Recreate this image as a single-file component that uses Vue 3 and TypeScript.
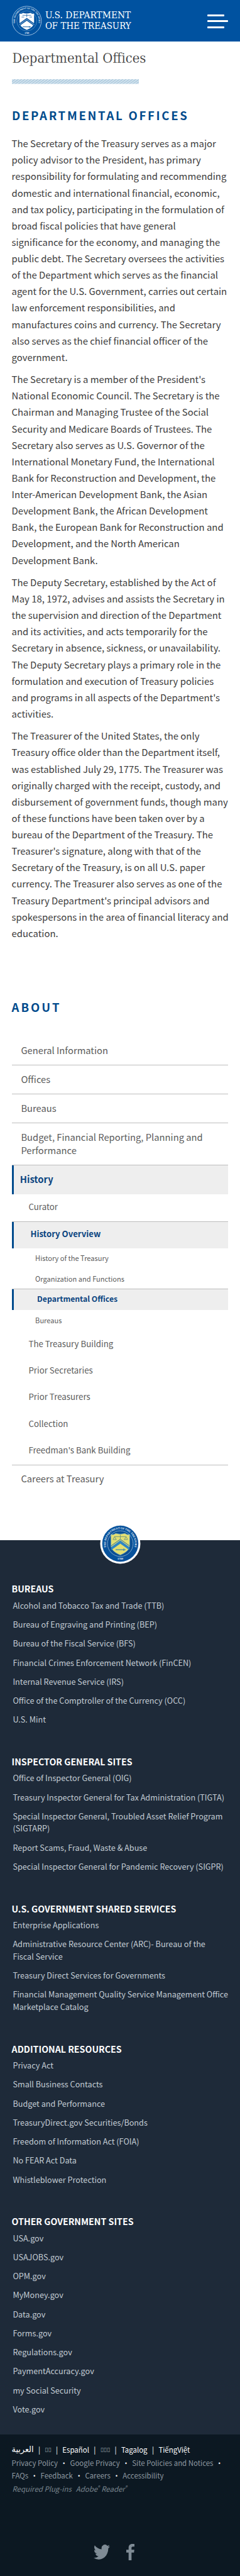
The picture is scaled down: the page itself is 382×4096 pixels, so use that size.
<script setup lang="ts">
interface NavItem {
  label: string
  level: 1 | 2 | 3
  active?: boolean
  rule?: boolean
}

interface LinkGroup {
  title: string
  links: string[]
}

const paragraphs: string[] = [
  `The Secretary of the Treasury serves as a major
policy advisor to the President, has primary
responsibility for formulating and recommending
domestic and international financial, economic,
and tax policy, participating in the formulation of
broad fiscal policies that have general
significance for the economy, and managing the
public debt. The Secretary oversees the activities
of the Department which serves as the financial
agent for the U.S. Government, carries out certain
law enforcement responsibilities, and
manufactures coins and currency. The Secretary
also serves as the chief financial officer of the
government.`,
  `The Secretary is a member of the President's
National Economic Council. The Secretary is the
Chairman and Managing Trustee of the Social
Security and Medicare Boards of Trustees. The
Secretary also serves as U.S. Governor of the
International Monetary Fund, the International
Bank for Reconstruction and Development, the
Inter-American Development Bank, the Asian
Development Bank, the African Development
Bank, the European Bank for Reconstruction and
Development, and the North American
Development Bank.`,
  `The Deputy Secretary, established by the Act of
May 18, 1972, advises and assists the Secretary in
the supervision and direction of the Department
and its activities, and acts temporarily for the
Secretary in absence, sickness, or unavailability.
The Deputy Secretary plays a primary role in the
formulation and execution of Treasury policies
and programs in all aspects of the Department's
activities.`,
  `The Treasurer of the United States, the only
Treasury office older than the Department itself,
was established July 29, 1775. The Treasurer was
originally charged with the receipt, custody, and
disbursement of government funds, though many
of these functions have been taken over by a
bureau of the Department of the Treasury. The
Treasurer's signature, along with that of the
Secretary of the Treasury, is on all U.S. paper
currency. The Treasurer also serves as one of the
Treasury Department's principal advisors and
spokespersons in the area of financial literacy and
education.`,
]

const nav: NavItem[] = [
  { label: 'General Information', level: 1, rule: true },
  { label: 'Offices', level: 1, rule: true },
  { label: 'Bureaus', level: 1, rule: true },
  { label: 'Budget, Financial Reporting, Planning and\nPerformance', level: 1, rule: true },
  { label: 'History', level: 1, active: true },
  { label: 'Curator', level: 2, rule: true },
  { label: 'History Overview', level: 2, active: true },
  { label: 'History of the Treasury', level: 3 },
  { label: 'Organization and Functions', level: 3, rule: true },
  { label: 'Departmental Offices', level: 3, active: true },
  { label: 'Bureaus', level: 3 },
  { label: 'The Treasury Building', level: 2 },
  { label: 'Prior Secretaries', level: 2 },
  { label: 'Prior Treasurers', level: 2 },
  { label: 'Collection', level: 2 },
  { label: "Freedman's Bank Building", level: 2, rule: true },
  { label: 'Careers at Treasury', level: 1 },
]

const groups: LinkGroup[] = [
  {
    title: 'BUREAUS',
    links: [
      'Alcohol and Tobacco Tax and Trade (TTB)',
      'Bureau of Engraving and Printing (BEP)',
      'Bureau of the Fiscal Service (BFS)',
      'Financial Crimes Enforcement Network (FinCEN)',
      'Internal Revenue Service (IRS)',
      'Office of the Comptroller of the Currency (OCC)',
      'U.S. Mint',
    ],
  },
  {
    title: 'INSPECTOR GENERAL SITES',
    links: [
      'Office of Inspector General (OIG)',
      'Treasury Inspector General for Tax Administration (TIGTA)',
      'Special Inspector General, Troubled Asset Relief Program\n(SIGTARP)',
      'Report Scams, Fraud, Waste & Abuse',
      'Special Inspector General for Pandemic Recovery (SIGPR)',
    ],
  },
  {
    title: 'U.S. GOVERNMENT SHARED SERVICES',
    links: [
      'Enterprise Applications',
      'Administrative Resource Center (ARC)- Bureau of the\nFiscal Service',
      'Treasury Direct Services for Governments',
      'Financial Management Quality Service Management Office\nMarketplace Catalog',
    ],
  },
  {
    title: 'ADDITIONAL RESOURCES',
    links: [
      'Privacy Act',
      'Small Business Contacts',
      'Budget and Performance',
      'TreasuryDirect.gov Securities/Bonds',
      'Freedom of Information Act (FOIA)',
      'No FEAR Act Data',
      'Whistleblower Protection',
    ],
  },
  {
    title: 'OTHER GOVERNMENT SITES',
    links: [
      'USA.gov',
      'USAJOBS.gov',
      'OPM.gov',
      'MyMoney.gov',
      'Data.gov',
      'Forms.gov',
      'Regulations.gov',
      'PaymentAccuracy.gov',
      'my Social Security',
      'Vote.gov',
    ],
  },
]
</script>

<template>
  <div class="page">
    <header class="topbar">
      <svg class="logo" width="220" height="56" viewBox="0 0 220 56">
        <circle cx="25.5" cy="26" r="25" fill="none" stroke="#b9d2ea" stroke-width="0.9" />
        <circle cx="25.5" cy="26" r="17.2" fill="none" stroke="#7fabd5" stroke-width="0.6" />
        <path id="logo-arc" d="M7.4 35.4 A20.400 20.400 0 1 1 43.600 35.400" fill="none" />
        <text class="ring"><textPath href="#logo-arc" startOffset="50%" text-anchor="middle">THE DEPARTMENT OF THE TREASURY</textPath></text>
        <text class="ring" x="25.5" y="49" text-anchor="middle">1789</text>
        <path d="M13 13.5 q3.5 1.5 6-1 q6 2.2 13 0 q2.500 2.500 6 1 v15 q0 8 -12.500 13 q-12.500 -5 -12.500 -13 z" fill="#fff" />
        <path d="M12.500 30.500 L25.500 21 L38.500 30.500 V35 L25.500 26 L12.500 35 Z" fill="#0a56a0" />
        <path d="M12.500 32.800 L25.500 23.500 L38.500 32.800" fill="none" stroke="#dbe8f5" stroke-width="0.700" />
        <path d="M18 16.500 h15 M25.500 14.500 v5 M16.500 19.500 h4.500 M30 19.500 h4.500" stroke="#0a56a0" stroke-width="0.800" fill="none" />
        <path d="M18.500 36.300 h14 M30 35.200 v2.600" stroke="#0a56a0" stroke-width="1" fill="none" />
        <text class="word" x="57" y="21.800" textLength="147" lengthAdjust="spacingAndGlyphs">U.S. DEPARTMENT</text>
        <text class="word" x="57" y="40.300" textLength="147.500" lengthAdjust="spacingAndGlyphs">OF THE TREASURY</text>
      </svg>
      <div class="burger"><i></i><i class="long"></i><i></i></div>
    </header>

    <main class="main">
      <svg class="title" width="290" height="40" viewBox="0 0 290 40">
        <text x="0.5" y="27.300" textLength="229.500" lengthAdjust="spacingAndGlyphs">Departmental Offices</text>
      </svg>
      <svg class="hatch" width="218" height="8" viewBox="0 0 218 8">
        <defs>
          <pattern id="hatch" width="5.600" height="4" patternUnits="userSpaceOnUse">
            <rect width="5.600" height="4" fill="#d5e5ef" />
            <path d="M-1.400 5 L7 -1 M-1.400 1 L1.400 -1 M4.200 5 L7 3" stroke="#8fb5d1" stroke-width="1" />
          </pattern>
        </defs>
        <rect width="218" height="8" fill="url(#hatch)" />
      </svg>
      <h2 class="heading">DEPARTMENTAL OFFICES</h2>
      <div class="copy">
        <p v-for="(text, i) in paragraphs" :key="i">{{ text }}</p>
      </div>
      <h2 class="heading about">ABOUT</h2>
      <nav class="side">
        <a
          v-for="(item, i) in nav"
          :key="i"
          :class="['lvl' + item.level, { active: item.active, rule: item.rule }]"
        >{{ item.label }}</a>
      </nav>
    </main>

    <footer class="footer">
      <svg class="seal" width="70" height="70" viewBox="0 0 70 70">
        <circle cx="35" cy="35" r="34.500" fill="#fff" />
        <circle cx="35" cy="35" r="31" fill="#07529c" />
        <circle cx="35" cy="35" r="22" fill="#0b4f93" stroke="#9ec1de" stroke-width="0.8" />
        <path id="seal-arc" d="M12.700 46.400 A25 25 0 1 1 57.300 46.400" fill="none" />
        <text class="ring2"><textPath href="#seal-arc" startOffset="50%" text-anchor="middle">THE DEPARTMENT OF THE TREASURY</textPath></text>
        <text class="ring2" x="35" y="62.500" text-anchor="middle">1789</text>
        <path d="M19 19 q4 2 8-1.500 q8 2.500 16 0 q4 3.500 8 1.500 v19 q0 10 -16 16.500 q-16 -6.500 -16 -16.500 z" fill="#e3df72" stroke="#7fb4c4" stroke-width="0.700" />
        <path d="M19.300 41 L35 29.500 L50.700 41 V46 L35 35 L19.300 46 Z" fill="#2f86c4" />
        <path d="M19.500 38.600 L35 27.500 L50.500 38.600" fill="none" stroke="#1b5fa0" stroke-width="1" />
        <path d="M25 23 h20 M35 20 v8 M22.500 28 h6 M41.500 28 h6 M25 23 l-2.500 5 M25 23 l3 5 M45 23 l-3 5 M45 23 l2.500 5" stroke="#6b9480" stroke-width="1" fill="none" />
        <path d="M27 45.500 h17 M41 43.500 v4" stroke="#3f86a8" stroke-width="1.300" fill="none" />
      </svg>
      <section v-for="g in groups" :key="g.title" class="group">
        <h3>{{ g.title }}</h3>
        <a v-for="l in g.links" :key="l">{{ l }}</a>
      </section>
    </footer>

    <div class="legal">
      <div class="langs">
        <span class="ar">العربية</span><b>|</b><span class="box">▯▯</span><b>|</b><span>Español</span><b>|</b><span class="box three">▯▯▯</span><b>|</b><span>Tagalog</span><b>|</b><span>TiếngViệt</span>
      </div>
      <div class="row"><span>Privacy Policy</span><b>•</b><span>Google Privacy</span><b>•</b><span>Site Policies and Notices</span><b>•</b></div>
      <div class="row"><span>FAQs</span><b>•</b><span>Feedback</span><b>•</b><span>Careers</span><b>•</b><span>Accessibility</span></div>
      <div class="row plug"><span>Required Plug-ins</span><span>Adobe<sup>®</sup> Reader<sup>®</sup></span></div>
      <div class="social">
        <svg width="28" height="26" viewBox="0 0 24 20" preserveAspectRatio="none">
          <path fill="#7f8b95" d="M23.950 2.400a10 10 0 0 1-2.820.780 4.960 4.960 0 0 0 2.160-2.720 9.900 9.900 0 0 1-3.120 1.190 4.920 4.920 0 0 0-8.380 4.480C7.690 5.940 4.070 3.980 1.640 1a4.930 4.930 0 0 0 1.520 6.570 4.900 4.900 0 0 1-2.230-.610v.060a4.920 4.920 0 0 0 3.950 4.830 5 5 0 0 1-2.210.080 4.940 4.940 0 0 0 4.600 3.420A9.870 9.870 0 0 1 0 17.400a14 14 0 0 0 7.550 2.200c9.050 0 14-7.500 14-13.980 0-.210 0-.420-.020-.630a9.940 9.940 0 0 0 2.420-2.590z" />
        </svg>
        <svg width="14" height="28" viewBox="0 0 14 28">
          <path fill="#7f8b95" d="M14 0.200V4.600H11.400C9.400 4.600 9 5.600 9 7V10H13.800L13.200 14.900H9V28H4V14.900H0V10H4V6.400C4 2.300 6.500 0 10.200 0C12 0 13.500 0.100 14 0.200Z" />
        </svg>
      </div>
    </div>
  </div>
</template>

<style>
body {
  background: #fff;
}
</style>

<style scoped>
.page {
  zoom: 0.92775;
  font-family: "Noto Sans CJK SC", "Noto Sans", sans-serif;
  color: #3d3d3d;
  background: #fff;
  overflow: hidden;
  height: 4415px;
}
.topbar {
  height: 71px;
  box-sizing: border-box;
  background: #0052a0;
  display: flex;
  justify-content: space-between;
  align-items: flex-start;
  padding: 9.500px 20px 0 20px;
}
.word {
  font: 15.600px "DejaVu Serif", serif;
  fill: #fff;
}
.ring {
  font: bold 3.800px "Liberation Serif", serif;
  fill: #e6f0fa;
}
.burger {
  width: 36px;
  padding-top: 15.500px;
  display: flex;
  flex-direction: column;
  gap: 7px;
}
.burger i {
  width: 29px;
  height: 3px;
  background: #fff;
  border-radius: 1px;
}
.burger .long {
  width: 36px;
}
.main {
  padding: 10px 20px 0;
  height: 2569px;
  box-sizing: border-box;
}
.title {
  display: block;
}
.title text {
  font: 24.500px "DejaVu Serif", serif;
  fill: #2b2b2b;
  stroke: #fff;
  stroke-width: 0.300px;
}
.hatch {
  display: block;
  margin-top: 15px;
}
.heading {
  margin: 38px 0 0;
  height: 30px;
  line-height: 30px;
  font-size: 20px;
  font-weight: 700;
  letter-spacing: 2.900px;
  color: #004b8d;
  white-space: nowrap;
  text-indent: 0.500px;
}
.copy {
  margin-top: 20px;
}
.copy p {
  margin: 0;
  padding-bottom: 10px;
  font-size: 16.080px;
  line-height: 28.160px;
  white-space: pre;
}
.about {
  margin-top: 87.500px;
  letter-spacing: 3.200px;
  text-indent: 0;
}
.side {
  margin-top: 36px;
}
.side a {
  display: block;
  box-sizing: border-box;
  border-bottom: 1px solid transparent;
  white-space: pre;
  color: #5b5b5b;
}
.side .rule {
  border-bottom-color: #bdbdbd;
}
.side .lvl1 {
  min-height: 49.300px;
  padding: 11.500px 0 13.800px 16px;
  font-size: 15.900px;
  line-height: 23px;
}
.side .lvl2 {
  height: 45.700px;
  padding: 12.200px 0 0 29px;
  font-size: 14.350px;
  line-height: 20px;
}
.side .lvl2.rule {
  height: 47.300px;
}
.side .lvl3 {
  height: 35.300px;
  padding: 8.500px 0 0 40.500px;
  font-size: 11.950px;
  line-height: 18px;
}
.side .lvl3 + .lvl2 {
  margin-top: 1px;
}
.side .active {
  background: #eee;
  border-left: 4px solid #004b8d;
  border-bottom: 0;
  color: #0a4480;
  font-weight: 700;
}
.side .lvl1.active {
  padding-left: 11px;
}
.side .lvl2.active {
  height: 45px;
  padding-top: 11.200px;
  font-size: 14.200px;
}
.side .lvl3.active {
  padding-top: 7.800px;
  font-size: 13.200px;
}
.footer {
  height: 1532.700px;
  box-sizing: border-box;
  background: #1e2a39;
  position: relative;
  padding: 70.300px 20px 0;
}
.seal {
  position: absolute;
  left: 171px;
  top: -29px;
}
.ring2 {
  font: bold 4.800px "Liberation Serif", serif;
  fill: #e8f0f8;
}
.group {
  margin-bottom: 37.400px;
}
.group h3 {
  margin: 0 0 4.550px;
  font-size: 15.300px;
  line-height: 26px;
  font-weight: 600;
  color: #fff;
  white-space: nowrap;
}
.group a {
  display: block;
  margin-left: 2px;
  padding-bottom: 11.600px;
  font-size: 13.650px;
  line-height: 21px;
  color: #c3ccd4;
  white-space: pre;
}
.legal {
  height: 242.300px;
  background: #0c1822;
  padding: 15.300px 20px 0;
  font-size: 12.350px;
  line-height: 22.150px;
  color: #8e98a1;
  box-sizing: border-box;
}
.langs,
.row {
  display: flex;
  height: 22.150px;
  white-space: pre;
}
.langs {
  color: #fff;
}
.langs b,
.row b {
  font-weight: 400;
  color: #fff;
  width: 19.200px;
  text-align: center;
}
.row b {
  width: 21px;
}
.langs .ar {
  font: 13.800px/22px "DejaVu Sans", sans-serif;
}
.langs .box {
  font: 10px/22px "DejaVu Sans", sans-serif;
  color: #9aa4ac;
}
.plug {
  font-style: italic;
  gap: 7.500px;
  color: #79848d;
  padding-left: 1px;
}
.plug sup {
  font-size: 8px;
  line-height: 1;
  vertical-align: 4px;
}
.social {
  display: flex;
  align-items: center;
  gap: 28px;
  padding: 84px 0 0 141px;
}
</style>
